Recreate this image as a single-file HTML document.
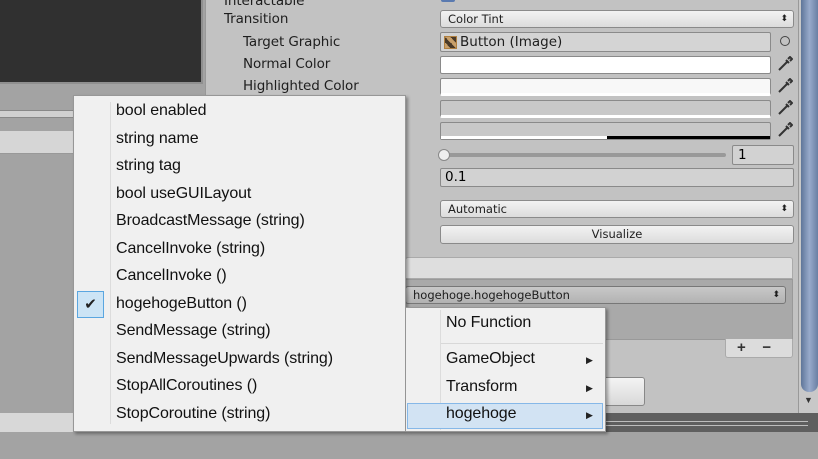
<!DOCTYPE html>
<html><head><meta charset="utf-8"><style>
*{margin:0;padding:0;box-sizing:border-box}
body{width:818px;height:459px;overflow:hidden;position:relative;background:#a3a3a3;font-family:"Liberation Sans","DejaVu Sans",sans-serif}
.a{position:absolute}
.lbl{position:absolute;font-size:13.5px;color:#1e1e1e;font-family:"DejaVu Sans",sans-serif;letter-spacing:-0.1px}
.fld{position:absolute;border:1px solid #8a8a8a;border-radius:2px}
.dd{position:absolute;border:1px solid #8a8a8a;border-radius:3px;background:linear-gradient(#f2f2f2,#dcdcdc);font-family:"DejaVu Sans",sans-serif;font-size:11.5px;color:#1e1e1e;padding-left:7px;line-height:16px}
.dd.s:after{content:"⬍";position:absolute;right:5px;top:0;font-size:9px}
.eye{position:absolute;left:777px;width:16px;height:16px}
.menu{position:absolute;background:#f0f0f0;border:1px solid #979797;box-shadow:2px 2px 3px rgba(0,0,0,.35)}
.it{position:absolute;font-size:16px;color:#111;white-space:nowrap;letter-spacing:-0.1px}
.arr{position:absolute;left:180px;font-size:9px;color:#222}
</style></head><body>
<div class="a" style="left:0;top:0;width:203px;height:84px;background:#303030;border-right:2px solid #8f8f8f;border-bottom:2px solid #8f8f8f"></div>
<div class="a" style="left:0;top:110px;width:205px;height:8px;background:#d0d0d0;border-top:1px solid #888;border-bottom:1px solid #888"></div>
<div class="a" style="left:0;top:131px;width:205px;height:23px;background:#d6d6d6;border-bottom:1px solid #999"></div>
<div class="a" style="left:0;top:413px;width:205px;height:19px;background:#d8d8d8"></div>
<div class="a" style="left:205px;top:0;width:593px;height:413px;background:#c2c2c2;border-left:1px solid #999"></div>
<div class="a" style="left:798px;top:0;width:20px;height:413px;background:#c8c8c8;border-left:1px solid #999"></div>
<div class="a" style="left:801px;top:0;width:17px;height:392px;background:linear-gradient(90deg,#5f7699,#98aacb,#6a80a3);border-radius:0 0 8px 8px"></div>
<div class="a" style="left:804px;top:395px;font-size:9px;color:#333">▼</div>
<div class="a" style="left:205px;top:413px;width:613px;height:20px;background:#5f5f5f"></div>
<div class="a" style="left:205px;top:421px;width:603px;height:1px;background:#bdbdbd"></div>
<div class="a" style="left:205px;top:425px;width:603px;height:1px;background:#bdbdbd"></div>
<div class="a" style="left:0;top:432px;width:818px;height:27px;background:#a3a3a3"></div>

<div class="lbl" style="left:224px;top:-7px">Interactable</div>
<div class="a" style="left:441px;top:-6px;width:14px;height:8px;background:#5a7ab0;border-radius:2px"></div>
<div class="lbl" style="left:224px;top:11px">Transition</div>
<div class="lbl" style="left:243px;top:34px">Target Graphic</div>
<div class="lbl" style="left:243px;top:56px">Normal Color</div>
<div class="lbl" style="left:243px;top:78px">Highlighted Color</div>

<div class="dd s" style="left:440px;top:10px;width:354px;height:18px">Color Tint</div>
<div class="fld" style="left:440px;top:32px;width:331px;height:20px;background:#d4d4d4;font-size:13.5px;font-family:'DejaVu Sans',sans-serif;line-height:18px;padding-left:19px;color:#1e1e1e">Button (Image)</div>
<div class="a" style="left:444px;top:36px;width:13px;height:13px;background:linear-gradient(45deg,#c9a06a 25%,#4a3a28 25%,#4a3a28 50%,#c9a06a 50%,#c9a06a 75%,#4a3a28 75%);border:1px solid #b08040"></div>
<div class="a" style="left:780px;top:36px;width:10px;height:10px;border:1.5px solid #444;border-radius:50%"></div>
<div class="fld" style="left:440px;top:56px;width:331px;height:18px;background:#fff"></div>
<div class="fld" style="left:440px;top:78px;width:331px;height:18px;background:#f8f8f8;border-bottom:3px solid #fff"></div>
<div class="fld" style="left:440px;top:100px;width:331px;height:18px;background:#c8c8c8;border-bottom:3px solid #fff"></div>
<div class="fld" style="left:440px;top:122px;width:331px;height:18px;background:#c8c8c8"></div>
<div class="a" style="left:441px;top:136px;width:166px;height:3px;background:#fff"></div>
<div class="a" style="left:607px;top:136px;width:163px;height:3px;background:#000"></div>
<svg class="eye" style="top:56px" viewBox="0 0 16 16"><path d="M2 14 L10 6 M9 4 L12 7 M11 3 L13 1 L15 3 L13 5" stroke="#333" stroke-width="2" fill="none"/></svg>
<svg class="eye" style="top:78px" viewBox="0 0 16 16"><path d="M2 14 L10 6 M9 4 L12 7 M11 3 L13 1 L15 3 L13 5" stroke="#333" stroke-width="2" fill="none"/></svg>
<svg class="eye" style="top:100px" viewBox="0 0 16 16"><path d="M2 14 L10 6 M9 4 L12 7 M11 3 L13 1 L15 3 L13 5" stroke="#333" stroke-width="2" fill="none"/></svg>
<svg class="eye" style="top:122px" viewBox="0 0 16 16"><path d="M2 14 L10 6 M9 4 L12 7 M11 3 L13 1 L15 3 L13 5" stroke="#333" stroke-width="2" fill="none"/></svg>
<div class="a" style="left:444px;top:153px;width:282px;height:4px;background:#999;border-radius:2px"></div>
<div class="a" style="left:438px;top:149px;width:12px;height:12px;background:#eee;border:1px solid #888;border-radius:50%"></div>
<div class="fld" style="left:732px;top:145px;width:62px;height:20px;background:#d2d2d2;font-size:13.5px;padding-left:5px;line-height:18px;font-family:'DejaVu Sans',sans-serif">1</div>
<div class="fld" style="left:440px;top:168px;width:354px;height:19px;background:#d2d2d2;font-size:13.5px;padding-left:4px;line-height:17px;font-family:'DejaVu Sans',sans-serif">0.1</div>
<div class="dd s" style="left:440px;top:200px;width:354px;height:18px">Automatic</div>
<div class="dd" style="left:440px;top:225px;width:354px;height:19px;text-align:center;padding:0">Visualize</div>
<div class="a" style="left:405px;top:257px;width:388px;height:22px;background:#dedede;border:1px solid #aaa;border-radius:3px 3px 0 0"></div>
<div class="a" style="left:405px;top:279px;width:388px;height:61px;background:#a9a9a9;border:1px solid #999"></div>
<div class="dd s" style="left:405px;top:286px;width:381px;height:18px;background:linear-gradient(#c8c8c8,#b2b2b2);border-color:#777">hogehoge.hogehogeButton</div>
<div class="a" style="left:725px;top:339px;width:68px;height:19px;background:#dcdcdc;border:1px solid #aaa;border-top:none;border-radius:0 0 3px 3px;font-size:15px;font-weight:bold;color:#333;padding-left:11px;line-height:18px">+&nbsp;&nbsp;&nbsp;&nbsp;−</div>
<div class="a" style="left:590px;top:377px;width:55px;height:29px;background:linear-gradient(#f4f4f4,#d8d8d8);border:1px solid #888;border-radius:3px"></div>

<div class="menu" style="left:73px;top:95px;width:333px;height:337px">
<div class="a" style="left:36px;top:6px;width:1px;height:322px;background:#dcdcdc"></div>
<div class="a" style="left:3px;top:195px;width:27px;height:27px;background:#cce4f5;border:1px solid #5aa6e0;font-size:15px;text-align:center;line-height:25px;color:#222">✔</div>
<div class="it" style="left:42px;top:6px">bool enabled</div>
<div class="it" style="left:42px;top:34px">string name</div>
<div class="it" style="left:42px;top:61px">string tag</div>
<div class="it" style="left:42px;top:89px">bool useGUILayout</div>
<div class="it" style="left:42px;top:116px">BroadcastMessage (string)</div>
<div class="it" style="left:42px;top:144px">CancelInvoke (string)</div>
<div class="it" style="left:42px;top:171px">CancelInvoke ()</div>
<div class="it" style="left:42px;top:199px">hogehogeButton ()</div>
<div class="it" style="left:42px;top:226px">SendMessage (string)</div>
<div class="it" style="left:42px;top:254px">SendMessageUpwards (string)</div>
<div class="it" style="left:42px;top:281px">StopAllCoroutines ()</div>
<div class="it" style="left:42px;top:309px">StopCoroutine (string)</div>
</div>
<div class="menu" style="left:406px;top:307px;width:200px;height:125px;border-left:none">
<div class="a" style="left:34px;top:2px;width:1px;height:120px;background:#dcdcdc"></div>
<div class="a" style="left:35px;top:35px;width:162px;height:1px;background:#d8d8d8"></div>
<div class="a" style="left:1px;top:95px;width:196px;height:26px;background:#d2e3f3;border:1px solid #86b8e8"></div>
<div class="it" style="left:40px;top:6px">No Function</div>
<div class="it" style="left:40px;top:42px">GameObject</div><div class="arr" style="top:47px">▶</div>
<div class="it" style="left:40px;top:70px">Transform</div><div class="arr" style="top:75px">▶</div>
<div class="it" style="left:40px;top:97px">hogehoge</div><div class="arr" style="top:102px">▶</div>
</div>
</body></html>
